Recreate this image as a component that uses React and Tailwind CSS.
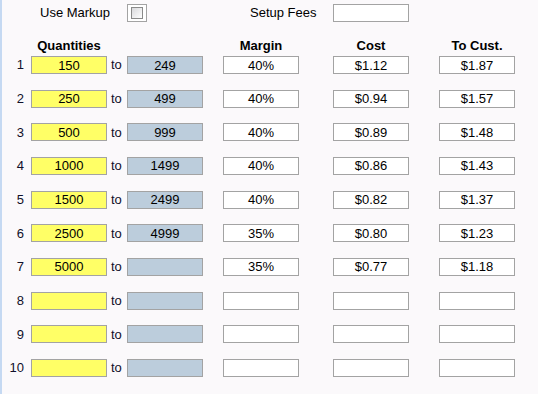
import React from "react";

const rows = [
  ["150", "249", "40%", "$1.12", "$1.87"],
  ["250", "499", "40%", "$0.94", "$1.57"],
  ["500", "999", "40%", "$0.89", "$1.48"],
  ["1000", "1499", "40%", "$0.86", "$1.43"],
  ["1500", "2499", "40%", "$0.82", "$1.37"],
  ["2500", "4999", "35%", "$0.80", "$1.23"],
  ["5000", "", "35%", "$0.77", "$1.18"],
  ["", "", "", "", ""],
  ["", "", "", "", ""],
  ["", "", "", "", ""],
];

const Box = ({ value, bg = "bg-white" }) => (
  <div
    className={`w-[76px] h-[18px] border border-[#a3a3a3] ${bg} flex items-center justify-center text-[13px] leading-none text-black`}
  >
    {value}
  </div>
);

export default function App() {
  return (
    <div
      className="w-[538px] h-[394px] bg-[#fbf9fb] border-l-2 border-[#c5d9f2] text-[13px] text-black overflow-hidden"
      style={{ fontFamily: '"Liberation Sans", Arial, sans-serif' }}
    >
      {/* markup / setup fees */}
      <div className="flex items-center h-[18px] mt-[4px]">
        <span className="ml-[38px] w-[87px]">Use Markup</span>
        <div className="w-[20px] h-[18px] border border-[#a3a3a3] bg-white flex items-center justify-center">
          <div className="w-[12px] h-[12px] border border-[#8a8a8a] bg-gradient-to-br from-[#d9d9dc] to-white" />
        </div>
        <span className="ml-[103px] w-[83px]">Setup Fees</span>
        <Box value="" />
      </div>

      {/* headers */}
      <div className="flex items-center h-[16px] mt-[16px] font-bold">
        <div className="ml-[29px] w-[76px] text-center">Quantities</div>
        <div className="ml-[116px] w-[76px] text-center">Margin</div>
        <div className="ml-[34px] w-[76px] text-center">Cost</div>
        <div className="ml-[30px] w-[76px] text-center">To Cust.</div>
      </div>

      {/* quantity rows */}
      <div className="flex flex-col gap-[15.67px] mt-[2px]">
        {rows.map((r, i) => (
          <div key={i} className="flex items-center h-[18px]">
            <div className="w-[22px] text-right text-[#10102a]">{i + 1}</div>
            <div className="ml-[7px]">
              <Box value={r[0]} bg="bg-[#ffff66]" />
            </div>
            <div className="w-[20px] pl-[4px] text-[#10102a]">to</div>
            <Box value={r[1]} bg="bg-[#bccddc]" />
            <div className="ml-[20px]">
              <Box value={r[2]} />
            </div>
            <div className="ml-[34px]">
              <Box value={r[3]} />
            </div>
            <div className="ml-[30px]">
              <Box value={r[4]} />
            </div>
          </div>
        ))}
      </div>
    </div>
  );
}
